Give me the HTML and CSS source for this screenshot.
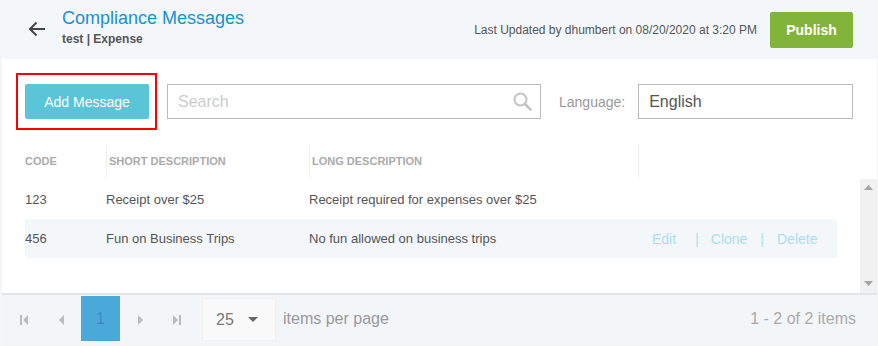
FILE: index.html
```html
<!DOCTYPE html>
<html lang="en">
<head>
    <meta charset="UTF-8">
    <meta name="viewport" content="width=device-width, initial-scale=1.0">
    <title>Compliance Messages</title>

    <link rel="stylesheet" href="styles.css">

</head>
<body>
    <div class="page-header">
        <a class="back" href="#">
            <svg width="18" height="16" viewBox="0 0 18 16">
                <path d="M17 8H2M8.5 1.5L2 8l6.5 6.5" fill="none" stroke="#444" stroke-width="2"/>
            </svg>
        </a>
        <div class="title-box">
            <h1>Compliance Messages</h1>
            <div class="subtitle">test | Expense</div>
        </div>
        <div class="updated">Last Updated by dhumbert on 08/20/2020 at 3:20 PM</div>
        <button class="btn-publish">Publish</button>
    </div>

    <div class="panel">

        <div class="toolbar">
            <div class="highlight">
                <button class="btn-add">Add Message</button>
            </div>
            <div class="search">
                <input type="text" placeholder="Search">
                <svg width="19" height="19" viewBox="0 0 19 19">
                    <circle cx="7.5" cy="7.5" r="6" fill="none" stroke="#c4c4c4" stroke-width="2"/>
                    <path d="M12 12l5.5 5.5" stroke="#c4c4c4" stroke-width="2.6" stroke-linecap="round"/>
                </svg>
            </div>
            <label class="lang-label">Language:</label>
            <div class="lang-select">English</div>
        </div>

        <div class="grid">
            <div class="grid-head">
                <div class="col col-code">Code</div>
                <div class="col col-short">Short Description</div>
                <div class="col col-long">Long Description</div>
                <div class="col col-actions"></div>
            </div>

            <div class="grid-body">
                <div class="rows">
                    <div class="row">
                        <div class="col col-code">123</div>
                        <div class="col col-short">Receipt over $25</div>
                        <div class="col col-long">Receipt required for expenses over $25</div>
                        <div class="col col-actions"></div>
                    </div>
                    <div class="row row-hover">
                        <div class="col col-code">456</div>
                        <div class="col col-short">Fun on Business Trips</div>
                        <div class="col col-long">No fun allowed on business trips</div>
                        <div class="col col-actions">
                            <a href="#">Edit</a>
                            <span class="pipe pipe-first">|</span>
                            <a href="#">Clone</a>
                            <span class="pipe">|</span>
                            <a href="#">Delete</a>
                        </div>
                    </div>
                </div>
                <div class="scrollbar">
                    <svg width="9" height="6" viewBox="0 0 9 6"><path d="M0 5h9L4.5 0z" fill="#a3a3a3"/></svg>
                    <svg width="9" height="6" viewBox="0 0 9 6"><path d="M0 0h9L4.5 5z" fill="#a3a3a3"/></svg>
                </div>
            </div>
        </div>

        <div class="pager">
            <span class="pager-nav nav-first">
                <svg width="8" height="10" viewBox="0 0 8 10"><path d="M0 0h2v10H0zM8 0v10L3 5z" fill="#bbb"/></svg>
            </span>
            <span class="pager-nav nav-prev">
                <svg width="6" height="10" viewBox="0 0 6 10"><path d="M6 0v10L1 5z" fill="#bbb"/></svg>
            </span>
            <span class="page-num">1</span>
            <span class="pager-nav nav-next">
                <svg width="6" height="10" viewBox="0 0 6 10"><path d="M0 0v10l5-5z" fill="#bbb"/></svg>
            </span>
            <span class="pager-nav nav-last">
                <svg width="8" height="10" viewBox="0 0 8 10"><path d="M0 0v10l5-5zM6 0h2v10H6z" fill="#bbb"/></svg>
            </span>
            <div class="page-size">
                <span>25</span>
                <svg width="10" height="5" viewBox="0 0 10 5"><path d="M0 0h10L5 5z" fill="#666"/></svg>
            </div>
            <span class="per-page">items per page</span>
            <span class="pager-info">1 - 2 of 2 items</span>
        </div>

    </div>
</body>
</html>
```

FILE: styles.css
```css
* {
    margin: 0;
    padding: 0;
    box-sizing: border-box;
}

body {
    width: 878px;
    height: 346px;
    overflow: hidden;
    background-color: #f4f7fa;
    font-family: "Liberation Sans", Arial, sans-serif;
    color: #555;
}

/* header */

.page-header {
    height: 59px;
    display: flex;
    align-items: center;
    padding: 0 25px 0 28px;
}

.page-header .back {
    display: flex;
    margin-top: -2px;
    margin-right: 16px;
}

.title-box {
    flex: 1;
    margin-top: -6px;
}

.title-box h1 {
    font-size: 18px;
    font-weight: normal;
    color: #1b8fd4;
    line-height: 22px;
}

.title-box .subtitle {
    font-size: 12px;
    font-weight: bold;
    color: #555;
    margin-top: 3px;
}

.updated {
    font-size: 12px;
    color: #555;
    margin-right: 13px;
}

.btn-publish {
    width: 83px;
    height: 36px;
    border: none;
    border-radius: 2px;
    background-color: #83b43a;
    color: #fff;
    font-family: inherit;
    font-size: 14px;
    font-weight: bold;
}

/* main panel */

.panel {
    margin: 0 1px 0 2px;
    height: 287px;
    background-color: #fff;
}

.toolbar {
    display: flex;
    align-items: center;
    padding: 14px 23px 0 14px;
}

.highlight {
    border: 2px solid #f00;
    padding: 9px 6px 9px 7px;
    margin-right: 10px;
}

.btn-add {
    display: block;
    width: 124px;
    height: 35px;
    border: none;
    border-radius: 2px;
    background-color: #5bc5d8;
    color: #fff;
    font-family: inherit;
    font-size: 14px;
}

.search {
    position: relative;
    width: 374px;
    height: 35px;
}

.search input {
    width: 100%;
    height: 100%;
    border: 1px solid #bbb;
    padding: 0 30px 0 10px;
    font-family: inherit;
    font-size: 16px;
    color: #555;
    outline: none;
}

.search input::placeholder {
    color: #ccc;
}

.search svg {
    position: absolute;
    top: 8px;
    right: 9px;
}

.lang-label {
    font-size: 14px;
    color: #999;
    margin: 0 13px 0 18px;
}

.lang-select {
    width: 215px;
    height: 35px;
    border: 1px solid #bbb;
    padding: 0 10px;
    line-height: 33px;
    font-size: 16px;
    color: #555;
}

/* grid */

.grid {
    margin-top: 13px;
    padding-left: 23px;
}

.grid-head,
.row {
    display: flex;
}

.grid-head {
    height: 36px;
    padding: 1px 0;
    align-items: stretch;
}

.grid-head .col {
    display: flex;
    align-items: center;
    font-size: 11px;
    font-weight: bold;
    text-transform: uppercase;
    color: #aaa;
}

.grid-head .col-short,
.grid-head .col-long,
.grid-head .col-actions {
    border-left: 1px solid #eee;
    padding-left: 2px;
}

.col-code {
    width: 81px;
}

.col-short {
    width: 203px;
}

.col-long {
    width: 329px;
}

.col-actions {
    width: 199px;
}

.grid-body {
    display: flex;
    height: 114px;
}

.rows {
    flex: 1;
}

.row {
    width: 812px;
    height: 40px;
    align-items: center;
    font-size: 13px;
    color: #555;
}

.row + .row {
    height: 39px;
}

.row-hover {
    background-color: #f3f7fa;
}

.row .col-actions {
    display: flex;
    padding-left: 14px;
    font-size: 14px;
}

.col-actions a,
.col-actions .pipe {
    color: #a9dfec;
    text-decoration: none;
}

.pipe {
    margin: 0 13px;
}

.pipe-first {
    margin: 0 12px 0 19px;
}

.scrollbar {
    width: 17px;
    background-color: #f1f1f1;
    display: flex;
    flex-direction: column;
    justify-content: space-between;
    align-items: center;
    padding: 6px 0 6px;
}

/* pager */

.pager {
    display: flex;
    align-items: center;
    height: 60px;
    border-top: 2px solid #e2e4e6;
    background-color: #f3f6f9;
    padding: 2px 21px 13px 18px;
    font-size: 16px;
}

.pager-nav {
    display: flex;
    margin-top: 3px;
}

.nav-first {
    margin-right: 30px;
}

.nav-prev {
    margin-right: 17px;
}

.nav-next {
    margin-right: 29px;
}

.nav-last {
    margin-right: 21px;
}

.page-num {
    width: 39px;
    height: 45px;
    line-height: 45px;
    text-align: center;
    background-color: #4aa9d8;
    color: #3a8cc0;
    margin-right: 18px;
}

.page-size {
    display: flex;
    align-items: center;
    justify-content: space-between;
    width: 74px;
    height: 43px;
    margin: 2px 7px 0 0;
    padding: 0 17px 0 13px;
    background-color: #f9f9f9;
    border: 1px solid #eef1f4;
    color: #777;
}

.per-page {
    color: #999;
    flex: 1;
}

.pager-info {
    color: #aaa;
}
```
